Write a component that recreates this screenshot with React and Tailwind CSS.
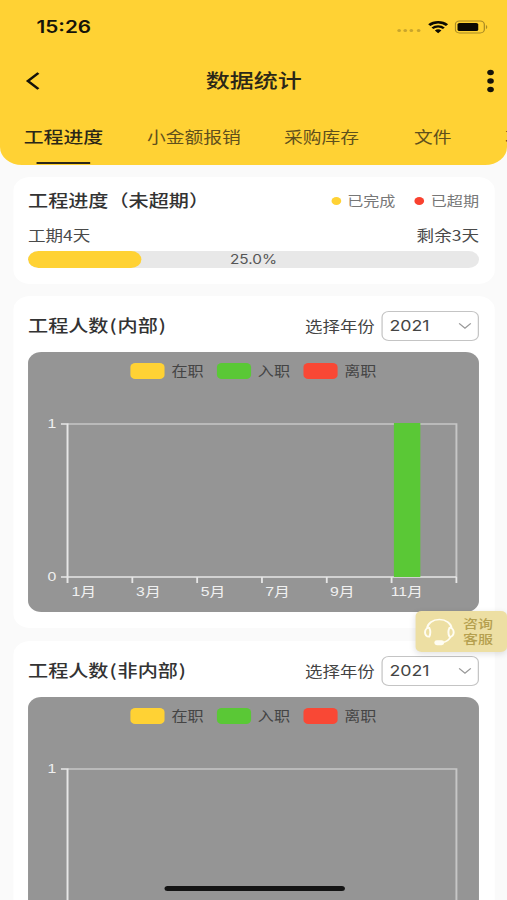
import React, { useState } from "react";

const tabs = [
  { name: "小金额报销", className: "ml-[36px]" },
  { name: "采购库存", className: "ml-[35.5px]" },
  { name: "文件", className: "ml-[45px]" },
  { name: "项目", className: "ml-[44px]" },
];

const allMonths = ["1月", "3月", "5月", "7月", "9月", "11月"];

const StatusBar = () => (
  <div className="flex h-[54px] items-center justify-between pl-[30px] pr-[15.5px]">
    <span className="mt-[1px] text-[17px] font-semibold text-[#15130a] font-['Inter',sans-serif]">15:26</span>
    <div className="flex items-center">
      <div className="mr-[6px] mt-[7px] flex gap-[2.2px]">
        {[0, 1, 2, 3].map((dot) => (
          <span key={dot} className="h-[3px] w-[3px] rounded-full bg-[#c9a52c]" />
        ))}
      </div>
      <svg width="17" height="14" viewBox="0 0 17 14" className="mr-[5px]">
        <path d="M1.2 5.2A10.5 10.5 0 0 1 15.8 5.2" fill="none" stroke="#0c0a02" strokeWidth="2.5" />
        <path d="M3.8 8.3A6.8 6.8 0 0 1 13.2 8.3" fill="none" stroke="#0c0a02" strokeWidth="2.2" />
        <path d="M5.8 10.5A4 4 0 0 1 11.2 10.5L8.5 13.3Z" fill="#0c0a02" />
      </svg>
      <svg width="28" height="14" viewBox="0 0 28 14">
        <rect x="0.6" y="1" width="23.8" height="12" rx="3.4" fill="none" stroke="#a88a24" />
        <rect x="2.4" y="3" width="17" height="8" rx="1.6" fill="#0c0a02" />
        <path d="M25.7 5v4.2c1.5-.6 1.5-3.6 0-4.2Z" fill="#a88a24" />
      </svg>
    </div>
  </div>
);

const Header = () => (
  <header className="h-[165px] overflow-hidden rounded-b-[18px] bg-[#ffd234]">
    <StatusBar />
    <div className="flex h-[54px] items-center justify-between pl-[20.5px] pr-[10.5px]">
      <svg width="13" height="20" viewBox="0 0 13 20">
        <path d="M10.5 2 2 10l8.5 8" fill="none" stroke="#15130a" strokeWidth="2.4" />
      </svg>
      <h1 className="mb-[2px] mr-[15.5px] text-[19.7px] font-medium text-[#2b2718]">数据统计</h1>
      <svg width="7" height="24" viewBox="0 0 7 24">
        <circle cx="3.5" cy="3.5" r="2.7" fill="#15130a" />
        <circle cx="3.5" cy="12" r="2.7" fill="#15130a" />
        <circle cx="3.5" cy="20.5" r="2.7" fill="#15130a" />
      </svg>
    </div>
    <nav className="flex h-[57px] whitespace-nowrap pl-[19.5px] text-[15.4px] text-[#5f501c]">
      <div className="flex shrink-0 flex-col items-center text-[16.3px] font-medium text-[#2b2718]">
        <span className="h-[54px] leading-[57px]">工程进度</span>
        <span className="h-[2px] w-[44px] bg-[#2b2718]" />
      </div>
      {tabs.map((tab) => (
        <span key={tab.name} className={`${tab.className} shrink-0 leading-[57px]`}>{tab.name}</span>
      ))}
    </nav>
  </header>
);

const ProgressCard = () => {
  const percent = 25;

  return (
    <section className="mx-[10.5px] mt-[12px] h-[107px] rounded-[14px] bg-white px-[12.5px] pt-[11px]">
      <div className="flex h-[24px] items-center justify-between">
        <h2 className="text-[16.5px] font-medium text-[#333]">工程进度（未超期）</h2>
        <div className="mt-[2px] flex items-center text-[13.2px] text-[#777]">
          <span className="mr-[5px] h-[8px] w-[8px] rounded-full bg-[#ffd234]" />
          <span>已完成</span>
          <span className="ml-[16px] mr-[5px] h-[8px] w-[8px] rounded-full bg-[#f9412f]" />
          <span>已超期</span>
        </div>
      </div>
      <div className="mt-[13px] flex h-[20px] items-center justify-between text-[14.4px] text-[#4a4a4a]">
        <span>工期4天</span>
        <span>剩余3天</span>
      </div>
      <div className="relative mt-[6px] h-[17px] overflow-hidden rounded-full bg-[#e8e8e8]">
        <div className="h-full rounded-full bg-[#ffd234]" style={{ width: `${percent}%` }} />
        <span className="absolute inset-0 text-center text-[12.6px] leading-[17px] text-[#555] font-['Inter',sans-serif]">
          {percent.toFixed(1)}%
        </span>
      </div>
    </section>
  );
};

const LegendItem = ({ color, label }) => (
  <div className="flex items-center">
    <span className={`mr-[5.5px] h-[15.5px] w-[28px] rounded-[4px] ${color}`} />
    <span className="text-[13.2px] leading-[16px] text-[#444]">{label}</span>
  </div>
);

const Chart = ({ bar, months }) => (
  <div className="h-[260px] rounded-[11px] bg-[#959595] pt-[11px]">
    <div className="flex h-[16px] items-center justify-center gap-[11px]">
      <LegendItem color="bg-[#ffd234]" label="在职" />
      <LegendItem color="bg-[#5ac836]" label="入职" />
      <LegendItem color="bg-[#f94835]" label="离职" />
    </div>
    <svg width="370" height="233" viewBox="0 27 370 233">
      <path d="M32.4 72H351.5V225" fill="none" stroke="#c6c6c6" strokeWidth="1.6" />
      <path d="M27 72h5.4M27 225h324.5M32.4 71.2V231" fill="none" stroke="#e6e6e6" strokeWidth="1.6" />
      {[1, 2, 3, 4, 5, 6].map((i) => (
        <path key={i} d={`M${32.4 + i * 53.18} 225v6`} stroke="#e6e6e6" strokeWidth="1.5" />
      ))}
      {bar && <rect x="300.2" y="71" width="21.7" height="154" fill="#5ac836" />}
      <g fill="#f0f0f0" fontSize="13" textAnchor="middle" className="font-['Liberation_Sans','Noto_Sans_CJK_SC',sans-serif]">
        <text x="19.5" y="76.5">1</text>
        {months.length > 0 && <text x="19.5" y="229.5">0</text>}
        {months.map((month, i) => (
          <text key={month} x={45.8 + i * 53} y="244.500">{month}</text>
        ))}
      </g>
    </svg>
  </div>
);

const PeopleCard = ({ title, bar, months, className }) => {
  const [year] = useState("2021");

  return (
    <section className={`${className} mx-[10.5px] h-[332px] rounded-[14px] bg-white px-[12.5px] pt-[15px]`}>
      <div className="mb-[11px] flex h-[30px] items-center">
        <h2 className="mb-[2px] flex-1 text-[16.5px] font-medium leading-[28px] text-[#333]">
          工程人数<span className="mx-[0.8px]">(</span>{title}<span className="ml-[0.8px]">)</span>
        </h2>
        <span className="mr-[5px] text-[14.3px] text-[#444]">选择年份</span>
        <button className="flex h-[30px] w-[80.5px] items-center justify-between rounded-[6px] border border-[#c4c4c4] pl-[6px] pr-[5px] text-[14.6px] text-[#444] font-['Inter',sans-serif]">
          <span className="pt-[2px]">{year}</span>
          <svg width="11" height="8" viewBox="0 0 11 8">
            <path d="M.7 1.3 5.5 6.2l4.8-4.9" fill="none" stroke="#999" strokeWidth="1.1" />
          </svg>
        </button>
      </div>
      <Chart bar={bar} months={months} />
    </section>
  );
};

const ServiceButton = () => (
  <button className="absolute right-0 top-[611px] flex h-[41px] w-[74.7px] items-center rounded-[5px] bg-[#eddfa3] pl-[6px] shadow-[0_2px_6px_rgba(0,0,0,0.12)]">
    <svg width="27" height="28" viewBox="0 0 27 28" fill="none" stroke="#fffdf2" strokeWidth="1.6">
      <path d="M3.4 10.500C3.800 5.500 8 1.500 13.500 1.500S23.200 5.500 23.600 10.500" />
      <path d="M5.200 9.800C.6 9.500.6 19 5.200 18.800c1-2.500 1-6.500 0-9ZM21.800 9.800c4.600-.3 4.600 9.200 0 9-1-2.500-1-6.500 0-9Z" />
      <path d="M22.800 18.800c-1.300 3-3.300 4.900-6.300 5.700" />
      <rect x="10.200" y="23" width="6.400" height="3.400" rx="1.300" fill="#fffdf2" />
    </svg>
    <span className="ml-[5.5px] w-[26px] text-left text-[12.3px] font-medium leading-[14.3px] text-[#b5a04f]">咨询客服</span>
  </button>
);

const App = () => {
  return (
    <div className="h-[900px] w-[507px] overflow-hidden">
      {/* wide-screen stretch of the 416px mobile layout */}
      <div className="relative h-[900px] w-[416px] origin-top-left scale-x-[1.21875] overflow-hidden bg-[#fafafa] font-['Noto_Sans_CJK_SC',sans-serif]">
        <Header />
        <main>
          <ProgressCard />
          <PeopleCard title="内部" bar months={allMonths} className="mt-[12px]" />
          <PeopleCard title="非内部" months={[]} className="mt-[13px]" />
        </main>
        <ServiceButton />
        <div className="absolute bottom-[9px] left-[134.5px] h-[5px] w-[148.5px] rounded-full bg-[#141414]" />
      </div>
    </div>
  );
};

export default App;
